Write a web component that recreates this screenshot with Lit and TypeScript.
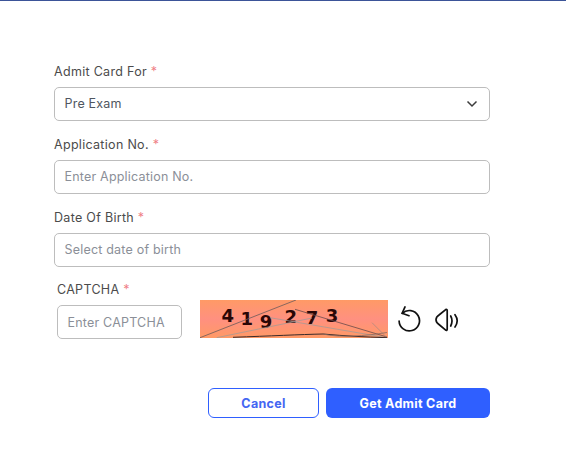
import { LitElement, html, css, svg } from "lit";
import { customElement } from "lit/decorators.js";

@customElement("app-root")
export class AppRoot extends LitElement {
  static styles = css`
    :host {
      display: block;
      width: 566px;
      height: 456px;
      background: #fff;
      font-family: "Inter", "Open Sans", sans-serif;
      color: #4a4a4a;
      box-sizing: border-box;
      border-top: 1px solid #3b5498;
      overflow: hidden;
    }
    .form {
      width: 436px;
      margin-left: 54px;
      padding-top: 63px;
      display: flex;
      flex-direction: column;
    }
    .field {
      display: flex;
      flex-direction: column;
      gap: 7px;
      margin-bottom: 16.5px;
    }
    label {
      font-size: 12.5px;
      line-height: 16px;
      height: 16px;
      color: #4b4b4b;
      letter-spacing: 0.3px;
    }
    .req {
      color: #ef7f87;
    }
    .box {
      box-sizing: border-box;
      height: 33.5px;
      border: 1px solid #bdbdbd;
      border-radius: 5px;
      display: flex;
      align-items: center;
      justify-content: space-between;
      padding: 0 9.5px;
      font-size: 12.5px;
      letter-spacing: 0.2px;
      color: #8b8f98;
    }
    .box.select {
      color: #4f5660;
      padding-right: 11px;
    }
    .captcha-row {
      display: flex;
      align-items: flex-start;
      margin-left: 3px;
      margin-top: -1px;
    }
    .captcha-col {
      display: flex;
      flex-direction: column;
      gap: 7px;
      width: 125px;
      margin-right: 18px;
    }
    .captcha-col .box {
      height: 34px;
    }
    .captcha-img {
      display: block;
      margin-top: 18px;
      flex: none;
    }
    .icons {
      display: flex;
      align-items: flex-start;
      gap: 14px;
      margin: 24px 0 0 9px;
    }
    .icons svg {
      display: block;
    }
    .icons .spk {
      margin-top: 2px;
    }
    .actions {
      display: flex;
      justify-content: flex-end;
      gap: 7px;
      margin-top: 49px;
    }
    button {
      box-sizing: border-box;
      height: 30px;
      border-radius: 6px;
      font-family: inherit;
      font-size: 12.5px;
      font-weight: 700;
      letter-spacing: 0.3px;
      padding: 0;
    }
    .cancel {
      width: 111px;
      background: #fff;
      border: 1px solid #2f5fff;
      color: #4466f2;
    }
    .submit {
      width: 164px;
      background: #2f5fff;
      border: none;
      color: #fff;
    }
  `;

  private captcha() {
    const digits: [string, number, number][] = [
      ["4", 227.7, 321.5],
      ["1", 246.7, 324.5],
      ["9", 266, 327.5],
      ["2", 290.7, 322.5],
      ["7", 312, 323.5],
      ["3", 332, 322],
    ];
    return html`<svg class="captcha-img" width="188" height="38" viewBox="200 300 188 38">
      <defs>
        <linearGradient id="g" x1="0" y1="0" x2="0" y2="1">
          <stop offset="0" stop-color="#ff9a66"></stop>
          <stop offset="0.5" stop-color="#ff9080"></stop>
          <stop offset="1" stop-color="#ff9a66"></stop>
        </linearGradient>
      </defs>
      <rect x="200" y="300" width="188" height="38" fill="url(#g)"></rect>
      ${digits.map(
        ([d, x, y]) =>
          svg`<text x=${x} y=${y} font-family="DejaVu Sans" font-weight="700" font-size="18" fill="#2a0606" text-anchor="middle">${d}</text>`
      )}
      <g fill="none" stroke-width="0.8">
        <path d="M200 337.7 L296 300" stroke="#6b5a5a"></path>
        <path d="M216.7 337.7 L312 318" stroke="#a69a96"></path>
        <path d="M270 317.7 L386.7 337.7" stroke="#a69a96"></path>
        <path d="M295 309.3 L387 337" stroke="#6a4a4a"></path>
        <path d="M372 322.7 L387 337.7" stroke="#b08a80"></path>
        <path d="M233 337.3 C270 336 300 334.5 323 334 C345 336 365 337 387 337.7" stroke="#3a2a2a" stroke-width="1"></path>
        <path d="M323 334 C340 338 365 336 387 332.5" stroke="#8a6a60"></path>
      </g>
    </svg>`;
  }

  render() {
    return html`
      <div class="form">
        <div class="field">
          <label>Admit Card For <span class="req">*</span></label>
          <div class="box select">
            <span>Pre Exam</span>
            <svg width="12" height="8" viewBox="0 0 12 8" fill="none" stroke="#3c3c3c" stroke-width="1.5">
              <path d="M1.5 1.5 L6 6 L10.5 1.5"></path>
            </svg>
          </div>
        </div>
        <div class="field">
          <label>Application No. <span class="req">*</span></label>
          <div class="box">Enter Application No.</div>
        </div>
        <div class="field">
          <label>Date Of Birth <span class="req">*</span></label>
          <div class="box">Select date of birth</div>
        </div>
        <div class="captcha-row">
          <div class="captcha-col">
            <label>CAPTCHA <span class="req">*</span></label>
            <div class="box">Enter CAPTCHA</div>
          </div>
          ${this.captcha()}
          <div class="icons">
            <svg width="24" height="26" viewBox="0 0 24 26" fill="none" stroke="#111" stroke-width="1.7" stroke-linecap="round" stroke-linejoin="round">
              <path d="M5.3 7.3 A10.2 10.2 0 1 1 2.1 15"></path>
              <path d="M8 0.9 L5.1 7.3 L12 9.7"></path>
            </svg>
            <svg class="spk" width="25" height="24" viewBox="0 0 25 24" fill="none" stroke="#111" stroke-width="1.7" stroke-linecap="round" stroke-linejoin="round">
              <path d="M11 1.3 L4 7 Q1 9 1 11.7 Q1 14.4 4 16.5 L11 22.3 Q12.2 22.6 12.2 21 L12.2 2.6 Q12.2 1 11 1.3 Z"></path>
              <path d="M15.7 8 Q18.3 12.8 15.7 18"></path>
              <path d="M20 6.7 Q24.4 12.8 20 19"></path>
            </svg>
          </div>
        </div>
        <div class="actions">
          <button class="cancel">Cancel</button>
          <button class="submit">Get Admit Card</button>
        </div>
      </div>
    `;
  }
}
